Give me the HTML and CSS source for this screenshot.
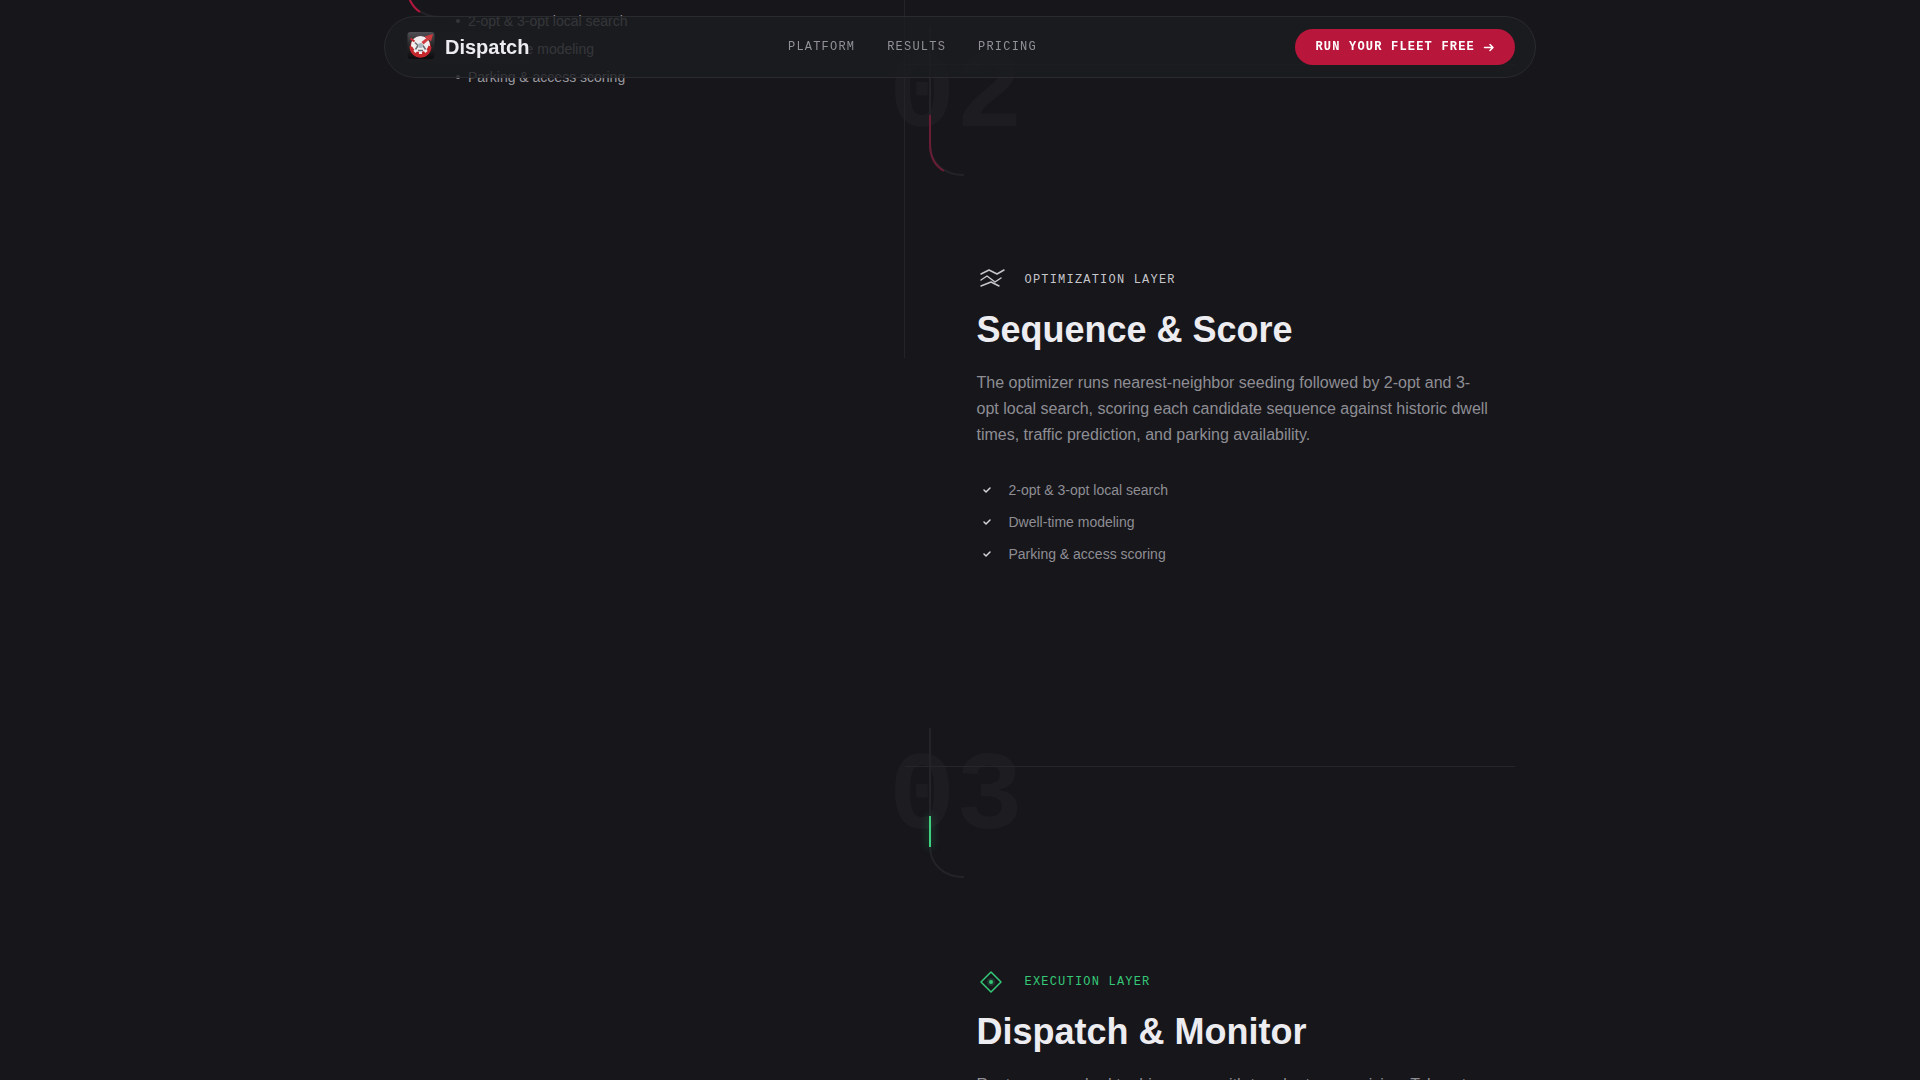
FILE: index.html
```html
<!DOCTYPE html>
<html lang="en">
<head>
    <meta charset="UTF-8">
    <meta name="viewport" content="width=device-width, initial-scale=1.0">
    <title>Dispatch</title>
    <link rel="stylesheet" href="styles.css">
</head>
<body>
    <header class="site-header">
        <a class="brand" href="#">
            <svg class="brand-logo" viewBox="0 0 32 32" aria-hidden="true">
                <defs>
                    <linearGradient id="tile" x1="0" y1="0" x2="0" y2="1">
                        <stop offset="0" stop-color="#505054"/>
                        <stop offset="0.45" stop-color="#29292c"/>
                        <stop offset="1" stop-color="#0d0d10"/>
                    </linearGradient>
                </defs>
                <rect x="2.500" y="1" width="27" height="27" rx="3" fill="url(#tile)"/>
                <circle cx="15.500" cy="16" r="10.500" fill="#b9252b"/>
                <circle cx="15.500" cy="14.500" r="9.500" fill="#f0eeee"/>
                <path d="M4.500 15a11 11 0 0 0 22 1l-3-1.500a8.500 8.500 0 0 1-16 1.500z" fill="#c4272c"/>
                <path d="M9.500 21l3.500-4M21.500 21l-3-4M15.500 23v-3" stroke="#f0eeee" stroke-width="3"/>
                <path d="M10 11.500l3 3-2.500 4M20.500 18.500l-2.500-4M13 19.500h5" fill="none" stroke="#6a6c72" stroke-width="1.500"/>
                <circle cx="15.500" cy="14.500" r="2.500" fill="#a7b4ba"/>
                <path d="M16.500 11l5-4-2-1.500L28 3l-2 7.500-2-2-5.500 5z" fill="#cf3a3f"/>
                <path d="M5.500 7.500l4 3" stroke="#c4272c" stroke-width="2"/>
            </svg>
            <span>Dispatch</span>
        </a>
        <nav class="main-nav">
            <a href="#platform">PLATFORM</a>
            <a href="#results">RESULTS</a>
            <a href="#pricing">PRICING</a>
        </nav>
        <button type="button" class="cta-button">
            RUN YOUR FLEET FREE
            <svg viewBox="0 0 12 12" aria-hidden="true">
                <path d="M1.500 6.500h8.500M7 3.500l3 3-3 3"/>
            </svg>
        </button>
    </header>

    <main class="pipeline" id="platform">
        <aside class="summary">
            <svg class="connector" viewBox="0 0 36 150" aria-hidden="true">
                <path class="track" d="M1 0V118C1 136 14 149 35 149"/>
                <path class="pulse red bright" d="M1 90V118C1 129 6 139 14 144"/>
            </svg>
            <ul class="summary-list">
                <li>2-opt &amp; 3-opt local search</li>
                <li>Dwell-time modeling</li>
                <li>Parking &amp; access scoring</li>
            </ul>
        </aside>

        <div class="stages">
            <section class="stage">
                <span class="stage-number">02</span>
                <svg class="connector" viewBox="0 0 36 150" aria-hidden="true">
                    <path class="track" d="M1 0V118C1 136 14 149 35 149"/>
                    <path class="pulse red" d="M1 89V118C1 130 6 140 15 145"/>
                </svg>
                <div class="stage-label">
                    <svg viewBox="0 0 32 32" aria-hidden="true">
                        <path d="M4 10l8-4 8 4 7-4M4 16l6-4 8 6 6-4M4 22l10-4 8 4"/>
                    </svg>
                    <span>OPTIMIZATION LAYER</span>
                </div>
                <h2>Sequence &amp; Score</h2>
                <p>The optimizer runs nearest-neighbor seeding followed by 2-opt and 3-opt local search, scoring each candidate sequence against historic dwell times, traffic prediction, and parking availability.</p>
                <ul class="check-list">
                    <li>
                        <svg viewBox="0 0 20 20" aria-hidden="true"><path d="M7 10l2 2 4-4"/></svg>
                        2-opt &amp; 3-opt local search
                    </li>
                    <li>
                        <svg viewBox="0 0 20 20" aria-hidden="true"><path d="M7 10l2 2 4-4"/></svg>
                        Dwell-time modeling
                    </li>
                    <li>
                        <svg viewBox="0 0 20 20" aria-hidden="true"><path d="M7 10l2 2 4-4"/></svg>
                        Parking &amp; access scoring
                    </li>
                </ul>
            </section>

            <section class="stage green">
                <span class="stage-number">03</span>
                <svg class="connector" viewBox="0 0 36 150" aria-hidden="true">
                    <path class="track" d="M1 0V118C1 136 14 149 35 149"/>
                    <path class="pulse" d="M1 88V119"/>
                </svg>
                <div class="stage-label">
                    <svg viewBox="0 0 32 32" aria-hidden="true">
                        <path d="M14 6l10 10-10 10L4 16z"/>
                        <circle cx="14" cy="16" r="4" class="halo"/>
                        <circle cx="14" cy="16" r="2" class="dot"/>
                    </svg>
                    <span>EXECUTION LAYER</span>
                </div>
                <h2>Dispatch &amp; Monitor</h2>
                <p>Routes are pushed to driver apps with turn-by-turn precision. Telemetry</p>
            </section>
        </div>
    </main>
</body>
</html>
```

FILE: styles.css
```css
* {
    box-sizing: border-box;
}

body {
    margin: 0;
    height: 100vh;
    overflow: hidden;
    background-color: #17161b;
    color: #ececf1;
    font-family: "Liberation Sans", Arial, sans-serif;
}

a {
    color: inherit;
    text-decoration: none;
}

ul {
    list-style: none;
    margin: 0;
    padding: 0;
}

/* header */
.site-header {
    position: fixed;
    top: 16px;
    left: 0;
    right: 0;
    z-index: 10;
    display: flex;
    align-items: center;
    justify-content: space-between;
    width: 60%;
    margin: 0 auto;
    padding: 12px 20px;
    border: 1px solid #292b2f;
    border-radius: 32px;
    background-color: rgba(28, 29, 33, 0.8);
}

.brand {
    display: flex;
    align-items: center;
    gap: 8px;
    background-color: #1b1c20;
    font-size: 20px;
    font-weight: bold;
}

.brand-logo {
    width: 32px;
    height: 32px;
}

.main-nav {
    display: flex;
    gap: 32px;
    color: #919197;
    font-family: "Liberation Mono", monospace;
    font-size: 12px;
    letter-spacing: 0.1em;
}

.cta-button {
    display: flex;
    align-items: center;
    gap: 8px;
    height: 36px;
    padding: 0 20px;
    border: none;
    border-radius: 18px;
    background-color: #b8173b;
    color: #fff;
    font-family: "Liberation Mono", monospace;
    font-size: 12px;
    font-weight: bold;
    letter-spacing: 0.1em;
    cursor: pointer;
}

.cta-button svg {
    width: 12px;
    height: 12px;
    fill: none;
    stroke: #fff;
    stroke-width: 1.5;
    stroke-linecap: round;
    stroke-linejoin: round;
}

/* pipeline */
.pipeline {
    display: grid;
    grid-template-columns: 9fr 11fr;
    align-items: start;
    width: 60%;
    margin: 0 auto;
    padding: 0 21px;
}

.summary {
    position: relative;
    min-height: 358px;
    padding: 7px 0 0 51px;
    border-right: 1px solid #232328;
}

.summary .connector {
    top: -132px;
    left: 1px;
}

.summary-list li {
    display: flex;
    align-items: center;
    gap: 8px;
    color: #98989e;
    font-size: 14px;
    line-height: 28px;
}

.summary-list li::before {
    content: "";
    width: 4px;
    height: 4px;
    border-radius: 50%;
    background-color: #98989e;
}

.stages {
    padding-top: 64px;
}

.stage {
    position: relative;
    min-height: 702px;
    padding: 199px 24px 0 72px;
    border-top: 1px solid #26262b;
}

.stage-number {
    position: absolute;
    top: -24px;
    left: -16px;
    z-index: -1;
    color: #1d1c21;
    font-family: "Liberation Mono", monospace;
    font-size: 112px;
    font-weight: bold;
    line-height: 112px;
}

/* route line that leads into each stage */
.connector {
    position: absolute;
    top: -39px;
    left: 24px;
    width: 36px;
    height: 150px;
    overflow: visible;
    fill: none;
    stroke-width: 2;
}

.track {
    stroke: #232328;
}

.pulse {
    stroke: #3ecf7f;
    filter: drop-shadow(0 0 4px #22804c);
}

.pulse.red {
    stroke: #6a1d35;
    filter: none;
}

.pulse.bright {
    stroke: #b5163f;
}

.stage-label {
    display: flex;
    align-items: center;
    gap: 16px;
    color: #c6c6cb;
    font-family: "Liberation Mono", monospace;
    font-size: 12px;
    letter-spacing: 0.1em;
}

.stage-label svg {
    width: 32px;
    height: 32px;
    fill: none;
    stroke: currentColor;
    stroke-width: 1.5;
    stroke-linecap: round;
    stroke-linejoin: round;
}

.stage-label .dot,
.stage-label .halo {
    fill: currentColor;
    stroke: none;
}

.stage-label .halo {
    opacity: 0.2;
}

.green .stage-label {
    color: #35c877;
}

.stage h2 {
    margin: 14px 0 20px;
    font-size: 36px;
    line-height: 40px;
}

.stage p {
    margin: 0;
    color: #8e8e94;
    font-size: 16px;
    line-height: 26px;
}

.check-list {
    display: flex;
    flex-direction: column;
    gap: 12px;
    margin-top: 32px;
}

.check-list li {
    display: flex;
    align-items: center;
    gap: 12px;
    color: #8e8e94;
    font-size: 14px;
    line-height: 20px;
}

.check-list svg {
    width: 20px;
    height: 20px;
    fill: none;
    stroke: #d6d6da;
    stroke-width: 1.5;
    stroke-linecap: round;
    stroke-linejoin: round;
}
```
